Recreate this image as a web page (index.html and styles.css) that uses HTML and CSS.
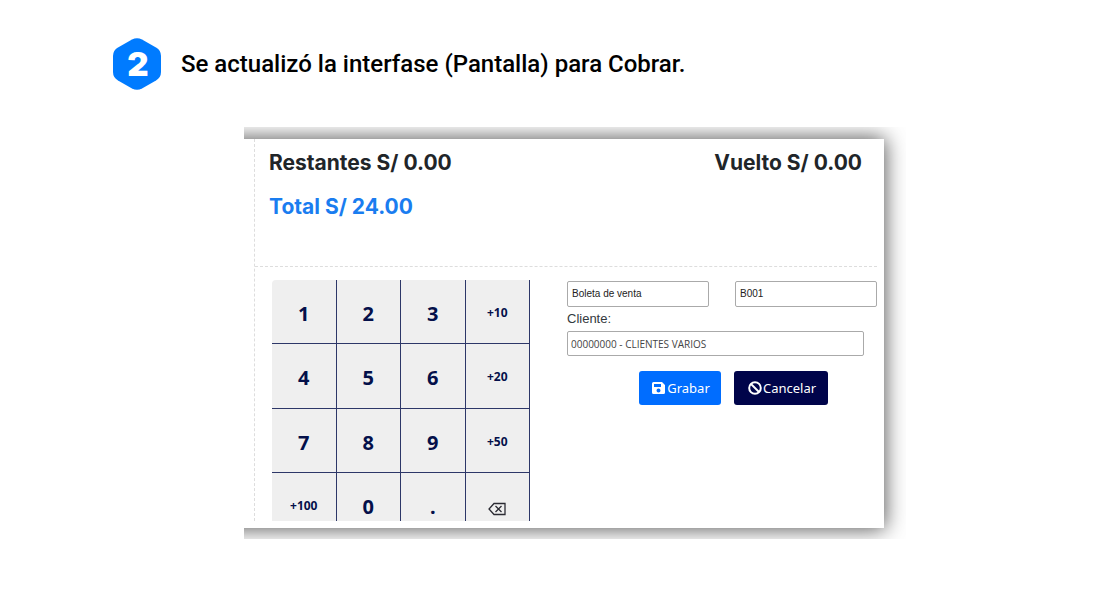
FILE: index.html
```html
<!DOCTYPE html>
<html lang="es">
<head>
<meta charset="utf-8">
<title>Pantalla para Cobrar</title>
<link rel="stylesheet" href="styles.css">
</head>
<body>
<main class="page">
  <header class="step">
    <span class="badge">
      <svg class="badge-shape" viewBox="0 0 48 52" aria-hidden="true"><path d="M19 1.6Q24 -1 29 1.6L43 9.6Q48 12.5 48 18V34Q48 39.500 43 42.400L29 50.400Q24 53 19 50.400L5 42.400Q0 39.500 0 34V18Q0 12.500 5 9.600Z" fill="#007bff"/></svg>
      <span class="badge-number">2</span>
    </span>
    <h1 class="step-title">Se actualizó la interfase (Pantalla) para Cobrar.</h1>
  </header>
  <section class="frame">
    <div class="card">
      <div class="content">
        <div class="totals">
          <div class="totals-row"><span>Restantes S/ 0.00</span><span>Vuelto S/ 0.00</span></div>
          <div class="totals-row total">Total S/ 24.00</div>
        </div>
        <div class="checkout">
          <div class="keypad">
            <button class="key">1</button><button class="key">2</button><button class="key">3</button><button class="key quick">+10</button>
            <button class="key">4</button><button class="key">5</button><button class="key">6</button><button class="key quick">+20</button>
            <button class="key">7</button><button class="key">8</button><button class="key">9</button><button class="key quick">+50</button>
            <button class="key quick">+100</button><button class="key">0</button><button class="key">.</button>
            <button class="key" aria-label="Borrar"><svg class="erase" viewBox="0 0 18 14" aria-hidden="true"><path d="M6 1.500H17V12.500H6L1 7ZM7.500 4L13.500 10M13.500 4L7.500 10" fill="none" stroke="#2b2b33" stroke-width="1.300"/></svg></button>
          </div>
          <form class="form">
            <div class="form-row">
              <select class="field" aria-label="Comprobante"><option>Boleta de venta</option></select>
              <select class="field" aria-label="Serie"><option>B001</option></select>
            </div>
            <label class="label" for="cliente">Cliente:</label>
            <input class="field client" id="cliente" type="text" value="00000000 - CLIENTES VARIOS">
            <div class="actions">
              <button class="btn save" type="button"><svg class="icon" viewBox="0 0 14 14" aria-hidden="true"><path fill="#fff" fill-rule="evenodd" d="M1.500 1H10L13 4V11.500Q13 13 11.500 13H1.500Q0 13 0 11.500V2.500Q0 1 1.500 1ZM2 3V6H9V3ZM6.500 7.500A2 2 0 1 0 6.500 11.500A2 2 0 1 0 6.500 7.500Z"/></svg>Grabar</button>
              <button class="btn cancel" type="button"><svg class="icon" viewBox="0 0 14 14" aria-hidden="true"><circle cx="7" cy="7" r="5.800" fill="none" stroke="#fff" stroke-width="2"/><path d="M3 3L11 11" stroke="#fff" stroke-width="2"/></svg>Cancelar</button>
            </div>
          </form>
        </div>
      </div>
    </div>
  </section>
</main>
</body>
</html>
```
FILE: styles.css
```css
* { box-sizing: border-box; }
body { margin: 0; background: #fff; font-family: "Open Sans", "Noto Sans", sans-serif; }
.page { padding: 38px 113px 32px; }
.step { display: flex; align-items: center; gap: 20px; }
.badge { display: grid; place-items: center; width: 48px; }
.badge-shape, .badge-number { grid-area: 1 / 1; }
.badge-shape { display: block; width: 48px; height: 52px; }
.badge-number { padding-left: 2px; color: #fff; font: 900 33px/52px Inter, sans-serif; }
.step-title { margin: 0; color: #000; font: 500 24px/32px Roboto, sans-serif; }
.frame { max-width: 662px; margin: 37px 0 0 131px; padding: 12px 22px 11px 0; overflow: hidden; }
/* The card starts left of the frame so that its shadow runs evenly to the clipped edge. */
.card { margin-left: -30px; padding: 0 7px 7px 40px; background: #fff; box-shadow: 0 0 20px 1px #555; }
.content { border-left: 1px dashed #ddd; }
.totals { padding: 9px 15px 0 14px; height: 128px; border-bottom: 1px dashed #ddd; color: #212529; font: 700 21px/30px Inter, sans-serif; }
.totals-row { display: flex; justify-content: space-between; margin-bottom: 14px; }
.total { color: #1a7df0; }
.checkout { display: flex; gap: 37px; padding: 13px 0 0 17px; }
.keypad { display: grid; grid-template-columns: repeat(4, 1fr); grid-template-rows: 64px 65px 64px 64px; flex: 0 0 258px; height: 241px; overflow: hidden; border-top-left-radius: 4px; }
.key { display: flex; align-items: center; justify-content: center; margin: 0; padding: 4px 0 0; border: 0; border-right: 1px solid #2d3768; border-bottom: 1px solid #2d3768; background: #efefef; color: #04104a; font: 700 20px/28px "Noto Sans", sans-serif; }
.quick { padding-top: 2px; font-size: 12px; }
.erase { width: 18px; height: 14px; margin-top: 4px; }
.form { flex: 1; min-width: 0; padding-top: 1px; }
.form-row { display: grid; grid-template-columns: 1fr 1fr; gap: 26px; }
.field { appearance: none; width: 100%; height: 26px; padding: 0 4px; border: 1px solid #aaa; border-radius: 2px; background: #fff; color: #222; font: 10px/14px "Liberation Sans", Arial, sans-serif; }
.label { display: block; margin: 2px 0 3px; color: #333a40; font: 13px/19px "Liberation Sans", Arial, sans-serif; }
.client { display: block; width: 297px; max-width: 100%; height: 25px; padding: 0 3px; color: #444; font-family: "Open Sans", sans-serif; }
.actions { display: flex; gap: 13px; margin: 15px 0 0 72px; }
.btn { display: flex; align-items: center; justify-content: center; gap: 1px; height: 34px; padding: 0; border: 0; border-radius: 3px; color: #fff; font: 13px/20px "Noto Sans", sans-serif; }
.save { width: 82px; padding-left: 2px; background: #006dff; }
.cancel { width: 94px; padding-left: 2px; background: #00044a; }
.icon { width: 14px; height: 14px; }
```
